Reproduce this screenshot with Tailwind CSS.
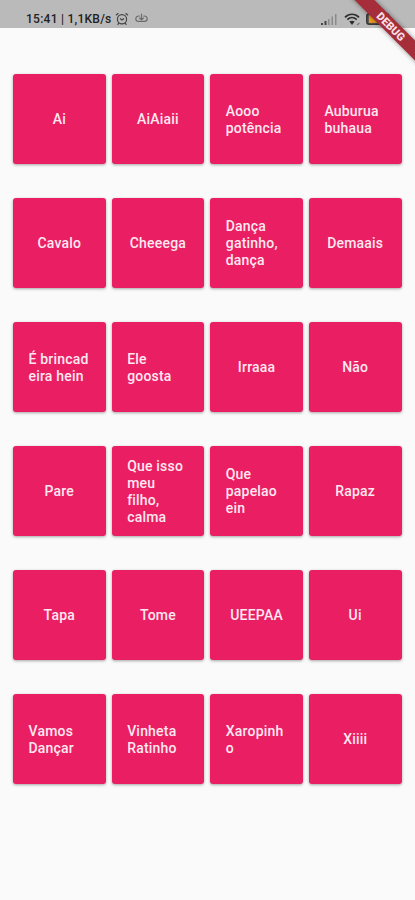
<!DOCTYPE html>
<html lang="pt-br">
<head>
  <meta charset="UTF-8"/>
  <meta name="viewport" content="width=device-width,initial-scale=1.0"/>
  <title>Botões de Som</title>
  <script src="https://cdn.jsdelivr.net/npm/@tailwindcss/browser@4"></script>
</head>
<body class="relative h-[900px] overflow-hidden bg-[#fafafa] font-['Roboto',sans-serif]">
  <!-- Barra de status -->
  <header class="flex h-7 items-center bg-[#bababa] pt-[10px] pl-[26px] text-[#222]">
    <span class="w-[86px] text-[12px] leading-none font-medium tracking-[0.25px] whitespace-nowrap">15:41 | 1,1KB/s</span>
    <svg class="ml-[3px] h-[14px] w-[14px]" viewBox="0 0 14 14" fill="none" stroke="#444" stroke-width="1.2">
      <circle cx="7" cy="7.3" r="4.6"/>
      <path d="M1 3.2 3.4 1.2M13 3.2 10.6 1.2M3.8 11 2.6 12.8M10.2 11l1.2 1.8M5 6.5l2 1.5 2-1.5"/>
    </svg>
    <svg class="mb-[2px] ml-[6px] h-[10px] w-[13px]" viewBox="0 0 13 10" fill="none" stroke="#6b6b6b" stroke-width="1.2">
      <path d="M4.7 3.2C2.6 2.5.8 3.8.8 5.7c0 1.6 1.2 2.6 2.7 2.6h6c1.5 0 2.7-1 2.7-2.6 0-1.9-1.8-3.2-3.9-2.5M6.5.8v5.8M4.3 4.8l2.2 2 2.2-2"/>
    </svg>
    <svg class="mr-[7px] ml-auto h-[11px] w-4" viewBox="0 0 16 11">
      <path fill="#444" d="M0 9h2v2H0zM3.5 7h2v4h-2z"/>
      <path fill="#8a8a8a" d="M7 5h1.5v6H7zM10.5 2.5H12V11h-1.5zM14 0h1.5v11H14z"/>
    </svg>
    <svg class="mr-[5px] h-[13px] w-[17px]" viewBox="0 0 17 13" fill="none" stroke="#303030" stroke-width="1.7">
      <path d="M1 4.3C5 .2 11 .2 15 4.3M3.3 6.7c2.8-2.8 6.6-2.8 9.4 0"/>
      <path d="M5.3 8.6 8 12l2.7-3.4c-1.5-1.3-3.9-1.3-5.4 0z" fill="#303030" stroke="none"/>
      <path d="M13 12l2.5-2" stroke="#777" stroke-width="1.2"/>
    </svg>
    <svg class="mr-[24px] h-3 w-[25px]" viewBox="0 0 25 12">
      <rect x=".8" y=".8" width="22" height="10.4" rx="2.5" fill="#6e6055" stroke="#383838" stroke-width="1.5"/>
      <rect x="3" y="2.2" width="8" height="7.6" fill="#f0a020"/>
    </svg>
  </header>

  <!-- Faixa de debug -->
  <div class="absolute top-0 right-0 h-[66px] w-[66px] overflow-hidden">
    <div class="absolute top-[17px] -left-[13px] flex h-[14px] w-[105px] rotate-45 items-center justify-center bg-[#a52e3a] pl-[7px] text-[11px] leading-none font-black text-[#f8dfe1] shadow-[0_0_5px_rgba(0,0,0,0.45)]">DEBUG</div>
  </div>

  <main id="grade" class="mt-[46px] grid grid-cols-4 gap-x-[6px] gap-y-[34px] pr-[13.5px] pl-[13px]"></main>

  <script>
    const sons = [
      'Ai', 'AiAiaii', 'Aooo<br>potência', 'Auburua<br>buhaua',
      'Cavalo', 'Cheeega', 'Dança<br>gatinho,<br>dança', 'Demaais',
      'É brincad<br>eira hein', 'Ele<br>goosta', 'Irraaa', 'Não',
      'Pare', 'Que isso<br>meu<br>filho,<br>calma', 'Que<br>papelao<br>ein', 'Rapaz',
      'Tapa', 'Tome', 'UEEPAA', 'Ui',
      'Vamos<br>Dançar', 'Vinheta<br>Ratinho', 'Xaropinh<br>o', 'Xiiii'
    ];

    // Rótulos de várias linhas ficam alinhados à esquerda
    document.getElementById('grade').innerHTML = sons.map(s => `
      <button class="flex h-[90px] items-center rounded-[3px] bg-[#e91e63] pt-px text-left text-[14px] leading-[17px] font-medium tracking-[0.2px] whitespace-nowrap text-[#ffe8f0] shadow-[0_1px_3px_rgba(0,0,0,0.35)] ${s.includes('<br>') ? 'pl-[15.5px]' : 'justify-center'}">
        <span>${s}</span>
      </button>
    `).join('');
  </script>
</body>
</html>
